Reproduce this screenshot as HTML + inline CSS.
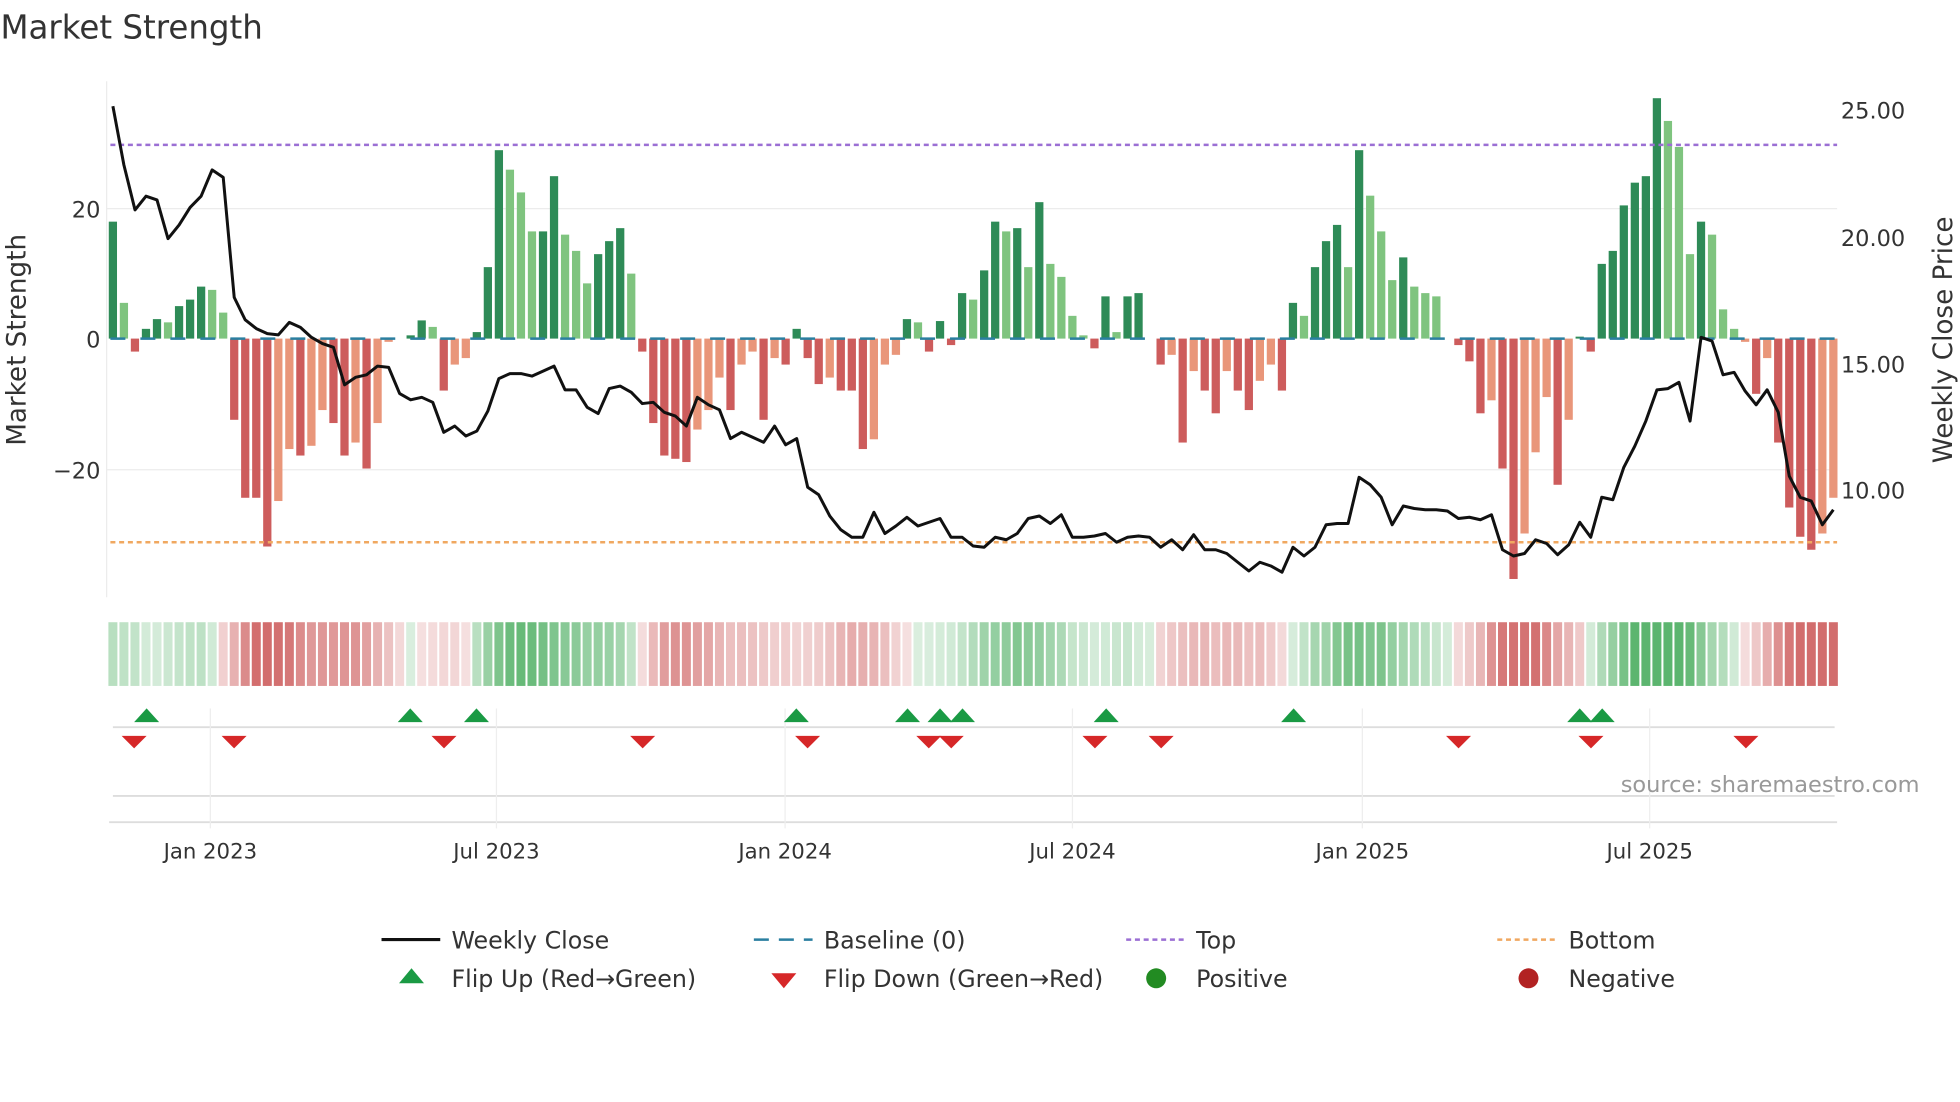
<!DOCTYPE html>
<html><head><meta charset="utf-8"><style>
html,body{margin:0;padding:0;background:#fff;width:1960px;height:1102px;overflow:hidden}
svg{display:block}
text{font-family:"DejaVu Sans","Liberation Sans",sans-serif;fill:#333}
</style></head><body>
<svg id="s" width="1960" height="1102" viewBox="0 0 1568 882" xmlns="http://www.w3.org/2000/svg">
<text x="0" y="31" font-size="26">Market Strength</text>
<g stroke="#ececec" stroke-width="1">
<line x1="85" y1="167" x2="1470" y2="167"/><line x1="85" y1="376" x2="1470" y2="376"/>
<line x1="85" y1="65" x2="85" y2="478"/>
</g>
<g id="g"></g>
<line x1="88" y1="116" x2="1470" y2="116" stroke="#9b6fd4" stroke-width="2" stroke-dasharray="4,3"/>
<line x1="88" y1="434" x2="1470" y2="434" stroke="#f0a860" stroke-width="2" stroke-dasharray="4,3"/>
<line x1="88" y1="271" x2="1470" y2="271" stroke="#2a7fa0" stroke-width="2" stroke-dasharray="12,12"/>
<polyline id="pl" fill="none" stroke="#111" stroke-width="2.4" stroke-linejoin="round"/>
<g font-size="18" text-anchor="end"><text x="80" y="174">20</text><text x="80" y="278">0</text><text x="80" y="383">−20</text></g>
<g font-size="18"><text x="1473" y="95">25.00</text><text x="1473" y="197">20.00</text><text x="1473" y="298">15.00</text><text x="1473" y="399">10.00</text></g>
<text transform="translate(20,272) rotate(-90)" font-size="21" text-anchor="middle">Market Strength</text>
<text transform="translate(1562,272) rotate(-90)" font-size="21" text-anchor="middle">Weekly Close Price</text>
<g stroke="#ddd" stroke-width="1.5">
<line x1="90" y1="582" x2="1468" y2="582"/><line x1="90" y1="637" x2="1468" y2="637"/><line x1="87" y1="658" x2="1470" y2="658"/>
</g>
<g id="mk"></g>
<text x="1536" y="634" font-size="18" text-anchor="end" style="fill:#999">source: sharemaestro.com</text>
<g font-size="17" text-anchor="middle"><text x="168" y="687">Jan 2023</text><text x="397" y="687">Jul 2023</text><text x="628" y="687">Jan 2024</text><text x="858" y="687">Jul 2024</text><text x="1090" y="687">Jan 2025</text><text x="1320" y="687">Jul 2025</text></g>
<g font-size="19">
<line x1="305" y1="752" x2="352" y2="752" stroke="#111" stroke-width="2.5"/><text x="361" y="759">Weekly Close</text>
<line x1="603" y1="752" x2="650" y2="752" stroke="#2a7fa0" stroke-width="2" stroke-dasharray="12,8"/><text x="659" y="759">Baseline (0)</text>
<line x1="901" y1="752" x2="948" y2="752" stroke="#9b6fd4" stroke-width="2" stroke-dasharray="4,3"/><text x="957" y="759">Top</text>
<line x1="1198" y1="752" x2="1245" y2="752" stroke="#f0a860" stroke-width="2" stroke-dasharray="4,3"/><text x="1255" y="759">Bottom</text>
<polygon points="319,787 329,775 339,787" fill="#1a9a44"/><text x="361" y="790">Flip Up (Red→Green)</text>
<polygon points="617,779 627,791 637,779" fill="#d62728"/><text x="659" y="790">Flip Down (Green→Red)</text>
<circle cx="925" cy="783" r="8" fill="#228b22"/><text x="957" y="790">Positive</text>
<circle cx="1223" cy="783" r="8" fill="#b22222"/><text x="1255" y="790">Negative</text>
</g>
</svg>
<script>
const v=[[18,1],[5.5,0],[-2,1],[1.5,1],[3,1],[2.5,0],[5,1],[6,1],[8,1],[7.5,0],[4,0],[-12.5,1],[-24.5,1],[-24.5,1],[-32,1],[-25,0],[-17,0],[-18,1],[-16.5,0],[-11,0],[-13,1],[-18,1],[-16,0],[-20,1],[-13,0],[-0.5,0],[0,0],[0.5,1],[2.8,1],[1.8,0],[-8,1],[-4,0],[-3,0],[1,1],[11,1],[29,1],[26,0],[22.5,0],[16.5,0],[16.5,1],[25,1],[16,0],[13.5,0],[8.5,0],[13,1],[15,1],[17,1],[10,0],[-2,1],[-13,1],[-18,1],[-18.5,1],[-19,1],[-14,0],[-11,0],[-6,0],[-11,1],[-4,0],[-2,0],[-12.5,1],[-3,0],[-4,1],[1.5,1],[-3,1],[-7,1],[-6,0],[-8,1],[-8,1],[-17,1],[-15.5,0],[-4,0],[-2.5,0],[3,1],[2.5,0],[-2,1],[2.7,1],[-1,1],[7,1],[6,0],[10.5,1],[18,1],[16.5,0],[17,1],[11,0],[21,1],[11.5,0],[9.5,0],[3.5,0],[0.5,0],[-1.5,1],[6.5,1],[1,0],[6.5,1],[7,1],[0,0],[-4,1],[-2.5,0],[-16,1],[-5,0],[-8,1],[-11.5,1],[-5,0],[-8,1],[-11,1],[-6.5,0],[-4,0],[-8,1],[5.5,1],[3.5,0],[11,1],[15,1],[17.5,1],[11,0],[29,1],[22,0],[16.5,0],[9,0],[12.5,1],[8,0],[7,0],[6.5,0],[0,0],[-1,1],[-3.5,1],[-11.5,1],[-9.5,0],[-20,1],[-37,1],[-30,0],[-17.5,0],[-9,0],[-22.5,1],[-12.5,0],[0.3,1],[-2,1],[11.5,1],[13.5,1],[20.5,1],[24,1],[25,1],[37,1],[33.5,0],[29.5,0],[13,0],[18,1],[16,0],[4.5,0],[1.5,0],[-0.5,0],[-8.5,1],[-3,0],[-16,1],[-26,1],[-30.5,1],[-32.5,1],[-30,0],[-24.5,0]];
const py=[85,132,168,157,160,191,180,166,157,136,142,238,256,263,267,268,258,262,270,275,278,308,302,300,293,294,315,320,318,322,346,341,349,345,329,303,299,299,301,297,293,312,312,326,331,311,309,314,323,322,330,333,341,318,324,328,351,346,350,354,341,356,351,390,396,413,424,430,430,410,427,421,414,421,418,415,430,430,437,438,430,432,427,415,413,419,412,430,430,429,427,434,430,429,430,438,432,440,428,440,440,443,450,457,450,453,458,438,445,438,420,419,419,382,388,398,420,405,407,408,408,409,415,414,416,412,440,445,443,432,435,444,436,418,430,398,400,374,357,337,312,311,306,337,270,273,300,298,313,324,312,330,381,398,401,420,408];
const N=v.length,x0=90,dx=(1467-90)/(N-1);let h='',pts=[];
for(let i=0;i<N;i++){const x=x0+i*dx,[a,d]=v[i],y=271-a*5.2;
 const c=a>=0?(d?'#2e8b57':'#7fc47f'):(d?'#cd5c5c':'#e9967a');
 if(Math.abs(a)>0.2)h+=`<rect x="${x-3.3}" y="${Math.min(y,271)}" width="6.6" height="${Math.abs(271-y)}" fill="${c}"/>`;
 let s=0,n=0;for(let k=Math.max(0,i-2);k<=Math.min(N-1,i+2);k++){s+=v[k][0];n++}s/=n;
 const t=Math.min(1,0.2+Math.abs(s)/30);
 const hc=s>=0?`rgba(46,160,70,${t*0.78})`:`rgba(195,60,60,${t*0.75})`;
 h+=`<rect x="${x-3.6}" y="498" width="7.2" height="51" fill="${hc}"/>`;
 pts.push(x.toFixed(1)+','+py[i]);}
document.getElementById('g').innerHTML=h;
document.getElementById('pl').setAttribute('points',pts.join(' '));
let m='';[168,397,628,858,1090,1320].forEach(x=>m+=`<line x1="${x}" y1="567" x2="${x}" y2="663" stroke="#eee"/>`);
[117,328,381,637,726,752,770,885,1035,1264,1282].forEach(x=>m+=`<polygon points="${x-10},578 ${x},567 ${x+10},578" fill="#1a9a44"/>`);
[107,187,355,514,646,743,761,876,929,1167,1273,1397].forEach(x=>m+=`<polygon points="${x-10},589 ${x},599 ${x+10},589" fill="#d62728"/>`);
document.getElementById('mk').innerHTML=m;
</script>
</body></html>
